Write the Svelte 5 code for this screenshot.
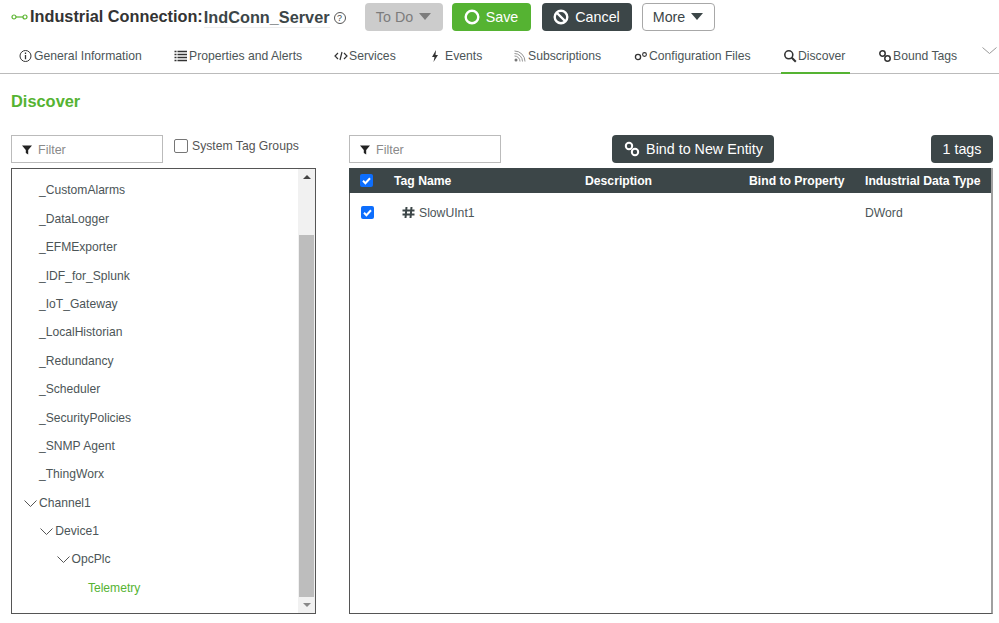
<script>
	const tabs = [
		{ label: 'General Information', icon: 'info', width: 122 },
		{ label: 'Properties and Alerts', icon: 'list', width: 127 },
		{ label: 'Services', icon: 'code', width: 63 },
		{ label: 'Events', icon: 'bolt', width: 50 },
		{ label: 'Subscriptions', icon: 'rss', width: 88 },
		{ label: 'Configuration Files', icon: 'config', width: 116 },
		{ label: 'Discover', icon: 'search', width: 62, active: true },
		{ label: 'Bound Tags', icon: 'link', width: 79 }
	];

	const groups = [
		{ name: '_CustomAlarms', depth: 0 },
		{ name: '_DataLogger', depth: 0 },
		{ name: '_EFMExporter', depth: 0 },
		{ name: '_IDF_for_Splunk', depth: 0 },
		{ name: '_IoT_Gateway', depth: 0 },
		{ name: '_LocalHistorian', depth: 0 },
		{ name: '_Redundancy', depth: 0 },
		{ name: '_Scheduler', depth: 0 },
		{ name: '_SecurityPolicies', depth: 0 },
		{ name: '_SNMP Agent', depth: 0 },
		{ name: '_ThingWorx', depth: 0 },
		{ name: 'Channel1', depth: 0, open: true },
		{ name: 'Device1', depth: 1, open: true },
		{ name: 'OpcPlc', depth: 2, open: true },
		{ name: 'Telemetry', depth: 3, selected: true }
	];
</script>

{#snippet funnel()}
	<svg class="funnel" width="10" height="10" viewBox="0 0 10 10"><path d="M0 0.5h10L6.200 5v4.500L3.800 8V5z" fill="#222" /></svg>
{/snippet}

{#snippet check()}
	<span class="check"><svg width="13" height="13" viewBox="0 0 13 13"><path d="M3 6.800l2.400 2.400L10 4.200" fill="none" stroke="#fff" stroke-width="2" /></svg></span>
{/snippet}

{#snippet tabIcon(name)}
	<svg class="tab-icon" width="14" height="14" viewBox="0 0 14 14" fill="none" stroke="#333">
		{#if name === 'info'}
			<circle cx="6.500" cy="7" r="5.500" /><path d="M6.500 6v4.200M6.500 3.600v1.300" stroke-width="1.300" />
		{:else if name === 'list'}
			<path d="M.5 2.500h2M.5 5.500h2M.5 8.500h2M.5 11.500h2M3.500 2.500h9.500M3.500 5.500h9.500M3.500 8.500h9.500M3.500 11.500h9.500" stroke-width="1.600" />
		{:else if name === 'code'}
			<path d="M4 4L1 7l3 3M10 4l3 3-3 3M8 3L6 11" stroke-width="1.200" />
		{:else if name === 'bolt'}
			<path d="M6 1L2 8h2.500L3.500 13 8 6H5.500z" fill="#333" stroke="none" />
		{:else if name === 'rss'}
			<circle cx="3" cy="11" r="1.500" fill="#777" stroke="none" />
			<path d="M1.500 7a5.500 5.500 0 015.500 5.500M1.500 4.500a8 8 0 018 8M1.500 2a10.500 10.500 0 0110.500 10.500" stroke="#888" stroke-width=".9" />
		{:else if name === 'config'}
			<circle cx="4" cy="8" r="2.600" stroke-width="1.300" /><circle cx="10.500" cy="5.500" r="1.900" stroke-width="1.100" />
		{:else if name === 'search'}
			<circle cx="5.800" cy="5.800" r="4" stroke-width="1.600" /><path d="M8.800 8.800l4 4" stroke-width="2" />
		{:else}
			<circle cx="4.500" cy="4.500" r="2.700" stroke-width="1.500" /><circle cx="9.500" cy="9.500" r="2.700" stroke-width="1.500" />
		{/if}
	</svg>
{/snippet}

<div class="page">
	<header class="top">
		<svg class="logo" width="17" height="6" viewBox="0 0 17 6" fill="none" stroke="#5bb531" stroke-width="1.200">
			<circle cx="3" cy="3" r="2" /><path d="M5 3h7" /><circle cx="14" cy="3" r="2" />
		</svg>
		<h1>Industrial Connection:</h1>
		<span class="server">IndConn_Server</span>
		<span class="help">?</span>
		<button class="btn todo">To Do <i class="caret"></i></button>
		<button class="btn save">
			<svg width="16" height="16" viewBox="0 0 16 16"><circle cx="8" cy="8" r="6.300" fill="none" stroke="#fff" stroke-width="2.400" /></svg>
			Save
		</button>
		<button class="btn cancel">
			<svg width="16" height="16" viewBox="0 0 16 16" fill="none" stroke="#fff" stroke-width="2.400"><circle cx="8" cy="8" r="6.300" /><path d="M3.500 3.500l9 9" /></svg>
			Cancel
		</button>
		<button class="btn more">More <i class="caret"></i></button>
	</header>

	<nav class="tabs">
		{#each tabs as tab}
			<div class="tab" class:active={tab.active} style="width: {tab.width}px">
				{@render tabIcon(tab.icon)}
				<span>{tab.label}</span>
			</div>
		{/each}
		<svg class="more-tabs" width="15" height="7" viewBox="0 0 15 7" fill="none" stroke="#999"><path d="M.5.500l7 6 7-6" /></svg>
	</nav>

	<h2>Discover</h2>

	<main class="columns">
		<section class="left">
			<div class="toolbar">
				<div class="filter">{@render funnel()}<span>Filter</span></div>
				<label class="system"><span class="box"></span>System Tag Groups</label>
			</div>
			<div class="tree">
				<ul>
					{#each groups as group}
						<li class:selected={group.selected} style="padding-left: {27 + group.depth * 16.3}px">
							{#if group.open}
								<svg class="chevron" width="13" height="7" viewBox="0 0 13 7" fill="none" stroke="#555"><path d="M.5.500l6 6 6-6" /></svg>
							{/if}
							{group.name}
						</li>
					{/each}
				</ul>
				<div class="scrollbar">
					<i class="arrow up"></i>
					<div class="track"><div class="thumb"></div></div>
					<i class="arrow down"></i>
				</div>
			</div>
		</section>

		<section class="right">
			<div class="toolbar spread">
				<div class="filter">{@render funnel()}<span>Filter</span></div>
				<button class="btn bind">
					<svg width="16" height="16" viewBox="0 0 16 16" fill="none" stroke="#fff" stroke-width="2"><circle cx="5" cy="5" r="3.200" /><circle cx="11" cy="11" r="3.200" /></svg>
					Bind to New Entity
				</button>
				<div class="btn count">1 tags</div>
			</div>
			<div class="table">
				<div class="row head">
					<div class="c-check">{@render check()}</div>
					<div class="c-name">Tag Name</div>
					<div class="c-desc">Description</div>
					<div class="c-bind">Bind to Property</div>
					<div class="c-type">Industrial Data Type</div>
				</div>
				<div class="row body">
					<div class="c-check">{@render check()}</div>
					<div class="c-name tag">
						<svg class="hash" width="13" height="13" viewBox="0 0 13 13" fill="none" stroke="#3c4648" stroke-width="2"><path d="M4.500 1L3.500 12M9.500 1L8.500 12M.5 4.500h12M.5 8.500h12" /></svg>
						SlowUInt1
					</div>
					<div class="c-desc"></div>
					<div class="c-bind narrow"></div>
					<div class="c-type">DWord</div>
				</div>
			</div>
		</section>
	</main>
</div>

<style>
	:global(body) {
		margin: 0;
		background: #fff;
		font-family: 'Liberation Sans', Arial, sans-serif;
		color: #3c4648;
	}

	.page {
		width: 999px;
		height: 623px;
		overflow: hidden;
	}

	.top {
		display: flex;
		align-items: center;
		height: 33px;
		padding-left: 11px;
	}

	.logo {
		flex: none;
		margin-right: 2px;
	}

	h1 {
		margin: 0;
		font-size: 16.300px;
		font-weight: 700;
		color: #333;
	}

	.server {
		margin: 3px 0 0 1px;
		font-size: 16.300px;
		font-weight: 700;
		color: #3c4648;
		border-bottom: 1px solid #eee;
	}

	.help {
		flex: none;
		width: 10px;
		height: 10px;
		margin: 3px 19px 0 4px;
		border: 1px solid #555;
		border-radius: 50%;
		font-size: 9px;
		line-height: 10px;
		text-align: center;
	}

	.btn {
		display: flex;
		flex: none;
		align-items: center;
		justify-content: center;
		gap: 6px;
		box-sizing: border-box;
		height: 28px;
		padding: 0;
		border: 0;
		border-radius: 4px;
		font-family: inherit;
		font-size: 14.300px;
		color: #fff;
		background: #3c4648;
	}

	.caret {
		width: 0;
		height: 0;
		border: 6px solid transparent;
		border-top: 7px solid currentColor;
		border-bottom: 0;
	}

	.todo {
		width: 78px;
		margin-right: 9px;
		background: #ccc;
		color: #7c7c7c;
	}

	.save {
		width: 79px;
		margin-right: 11px;
		background: #55b332;
	}

	.cancel {
		width: 90px;
		margin-right: 10px;
	}

	.more {
		width: 73px;
		background: #fff;
		border: 1px solid #a8a8a8;
		color: #3c4648;
	}

	.tabs {
		display: flex;
		position: relative;
		box-sizing: border-box;
		height: 41px;
		padding-left: 19px;
		gap: 33px;
		border-bottom: 1px solid #bbb;
	}

	.tab {
		display: flex;
		position: relative;
		flex: none;
		align-items: center;
		gap: 1px;
		box-sizing: border-box;
		height: 41px;
		padding-top: 5px;
		font-size: 12.200px;
		white-space: nowrap;
		color: #4c5557;
	}

	.tab-icon {
		flex: none;
	}

	.tab.active::after {
		content: '';
		position: absolute;
		left: -2px;
		right: -5px;
		bottom: 0;
		height: 2px;
		background: #55b332;
	}

	.more-tabs {
		position: absolute;
		right: 2px;
		top: 14px;
	}

	h2 {
		margin: 18px 0 24px 11px;
		font-size: 16.400px;
		line-height: 19px;
		color: #55b332;
	}

	.columns {
		display: flex;
		gap: 33px;
		padding-left: 11px;
	}

	.left {
		width: 305px;
	}

	.right {
		width: 644px;
	}

	.toolbar {
		display: flex;
		height: 28px;
		margin-bottom: 5px;
	}

	.spread .bind {
		width: 162px;
		margin-left: 111px;
		padding-left: 1px;
	}

	.spread .count {
		width: 62px;
		margin-left: auto;
	}

	.filter {
		display: flex;
		align-items: center;
		box-sizing: border-box;
		width: 152px;
		height: 28px;
		padding: 1px 0 0 10px;
		border: 1px solid #bbb;
		font-size: 12.500px;
		color: #8a8a8a;
	}

	.funnel {
		flex: none;
		margin-right: 6px;
	}

	.system {
		display: flex;
		align-items: center;
		height: 22px;
		margin-left: 11px;
		font-size: 12.200px;
		color: #555;
	}

	.box {
		width: 12px;
		height: 12px;
		margin-right: 4px;
		border: 1px solid #767676;
		border-radius: 2px;
	}

	.tree {
		display: flex;
		box-sizing: border-box;
		height: 446px;
		border: 1px solid #555;
		overflow: hidden;
	}

	ul {
		flex: 1;
		margin: 7.400px 0 0;
		padding: 0;
		list-style: none;
	}

	li {
		position: relative;
		height: 28.400px;
		line-height: 28.400px;
		font-size: 12.100px;
		color: #4c5557;
	}

	li.selected {
		color: #55b332;
	}

	.chevron {
		position: absolute;
		margin-left: -15px;
		top: 11px;
	}

	.scrollbar {
		display: flex;
		flex-direction: column;
		align-items: center;
		width: 17px;
		background: #f1f1f1;
	}

	.arrow {
		flex: none;
		width: 0;
		height: 0;
		margin: 6px 0;
		border: 4px solid transparent;
	}

	.arrow.up {
		border-top: 0;
		border-bottom-color: #444;
	}

	.arrow.down {
		border-bottom: 0;
		border-top-color: #888;
	}

	.track {
		flex: 1;
		align-self: stretch;
		padding-top: 50px;
		display: flex;
	}

	.thumb {
		flex: 1;
		margin: 0 1px;
		background: #bdbdbd;
	}

	.table {
		box-sizing: border-box;
		height: 446px;
		border: 1px solid #555;
		border-top: 0;
		border-right: 2px solid #a0a0a0;
	}

	.row {
		display: flex;
		align-items: center;
		font-size: 12.200px;
	}

	.head {
		height: 25px;
		margin: 0 0 0 -1px;
		background: #3c4648;
		color: #fff;
		font-weight: 700;
	}

	.body {
		height: 39px;
		color: #4c5557;
	}

	.c-check {
		display: flex;
		width: 45px;
		padding-left: 11px;
		box-sizing: border-box;
	}

	.c-name {
		width: 191px;
	}

	.c-desc {
		width: 164px;
	}

	.c-bind {
		width: 116px;
	}

	.c-bind.narrow {
		width: 115px;
	}

	.c-type {
		white-space: nowrap;
	}

	.tag {
		display: flex;
		align-items: center;
		gap: 4px;
	}

	.check {
		display: flex;
		width: 13px;
		height: 13px;
		border-radius: 2px;
		background: #0d6efd;
	}

	.hash {
		flex: none;
		margin-left: 7px;
	}
</style>
